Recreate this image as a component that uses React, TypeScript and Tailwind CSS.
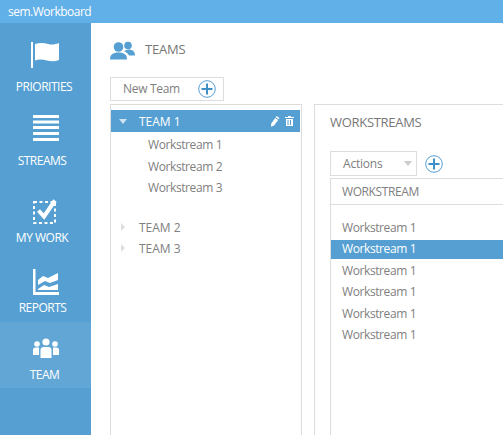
import { ReactNode } from "react";

function FlagIcon() {
  return (
    <svg width="30" height="26" viewBox="0 0 30 26" fill="white">
      <rect x="0" y="0" width="2" height="26" />
      <path d="M4 2c5-1.500 9-1 13 0s7 .5 11-1v17c-4 1.500-8 1.500-12 .5s-8-1.500-12 0z" />
    </svg>
  );
}

function StreamsIcon() {
  return (
    <svg width="26" height="26" viewBox="0 0 26 26" fill="white">
      <rect x="0" y="0" width="26" height="3" />
      <rect x="0" y="5.5" width="26" height="3" />
      <rect x="0" y="11" width="26" height="3" />
      <rect x="0" y="17" width="26" height="3" />
      <rect x="0" y="23" width="26" height="3" />
    </svg>
  );
}

function WorkIcon() {
  return (
    <svg width="26" height="27" viewBox="0 0 26 27" fill="none">
      <rect x="1" y="4" width="21" height="21" stroke="white" strokeWidth="2" strokeDasharray="3 2.5" />
      <path d="M5.5 12.5l5.5 6L22 2.5" stroke="white" strokeWidth="4" />
    </svg>
  );
}

function ReportsIcon() {
  return (
    <svg width="26" height="26" viewBox="0 0 26 26" fill="white">
      <path d="M0 0h2.5v23H26v3H0z" />
      <path d="M5 11l5-4 5 2 10-5v7l-8 3-5-2-7 4z" />
      <path d="M5 20l6-4 5 2 9-3v6H5z" />
    </svg>
  );
}

function TeamIcon() {
  return (
    <svg width="26" height="20" viewBox="0 0 26 20" fill="white">
      <circle cx="13" cy="4" r="3.6" />
      <path d="M7.5 20v-8c0-2 1.5-3 3-3h5c1.500 0 3 1 3 3v8z" />
      <circle cx="4" cy="6" r="2.8" />
      <path d="M0 17v-5c0-1.500 1-2.500 2.500-2.500h3.500L6 17z" />
      <circle cx="22" cy="6" r="2.800" />
      <path d="M26 17v-5c0-1.500-1-2.500-2.500-2.500H20v7.500z" />
    </svg>
  );
}

function PeopleIcon() {
  return (
    <svg width="25" height="19" viewBox="0 0 25 19" fill="#559fd2">
      <circle cx="8.500" cy="6" r="4.800" />
      <path d="M0 18.500c0-5 3-7 8.500-7s8.500 2 8.500 7z" />
      <circle cx="18" cy="4.500" r="3.800" />
      <path d="M14 10c1.500-1 3-1.500 4.500-1.500 4 0 6.500 2 6.500 6h-6c-1-2-3-3.500-5-4.500z" />
    </svg>
  );
}

function PlusCircle() {
  return (
    <svg width="18" height="18" viewBox="0 0 18 18" fill="none">
      <circle cx="9" cy="9" r="8.300" stroke="#559fd2" strokeWidth="1" />
      <path d="M9 3.500v11M3.500 9h11" stroke="#3f8fc8" strokeWidth="2" />
    </svg>
  );
}

function NavItem(props: { icon: ReactNode; label: string; className: string; labelClass?: string; active?: boolean }) {
  return (
    <div
      className={`flex flex-col items-center text-white text-[12px] leading-4 tracking-[-0.5px] ${props.active ? "bg-[#62a6d6]" : ""} ${props.className}`}
    >
      {props.icon}
      <span className={props.labelClass}>{props.label}</span>
    </div>
  );
}

export default function App() {
  const rows = [false, true, false, false, false, false];

  return (
    <div
      className="flex h-[435px] w-[503px] flex-col overflow-hidden bg-white text-[#808080]"
      style={{ fontFamily: '"Open Sans", sans-serif' }}
    >
      <div className="flex h-[23px] shrink-0 items-center bg-[#62b0e8] pl-[8px] text-[12px] tracking-[-0.5px] text-white">
        sem.Workboard
      </div>

      <div className="flex min-h-0 flex-1">
        <div className="flex w-[91px] shrink-0 flex-col bg-[#559fd2]">
          <NavItem className="h-[73px] pt-[19px] gap-[11px]" labelClass="pr-[3px]" icon={<FlagIcon />} label="PRIORITIES" />
          <NavItem className="h-[83px] pt-[19px] gap-[12px]" labelClass="pr-[7px]" icon={<StreamsIcon />} label="STREAMS" />
          <NavItem className="h-[83px] pt-[19px] gap-[5px]" labelClass="pr-[7px]" icon={<WorkIcon />} label="MY WORK" />
          <NavItem className="h-[60px] pt-[7px] gap-[5px]" labelClass="pr-[6px]" icon={<ReportsIcon />} label="REPORTS" />
          <NavItem className="h-[66px] pt-[16px] gap-[9px]" labelClass="pr-[2px]" icon={<TeamIcon />} label="TEAM" active />
        </div>

        <div className="flex min-w-0 flex-1 flex-col pl-[19px]">
          <div className="flex h-[54px] shrink-0 items-center gap-[10px] text-[13px] tracking-[-0.2px] text-[#777777]">
            <PeopleIcon />
            <span>TEAMS</span>
          </div>

          <div className="flex h-[24px] w-[114px] shrink-0 items-center justify-between border border-[#dddddd] pl-[12px] pr-[7px] text-[12px] tracking-[-0.3px]">
            <span>New Team</span>
            <PlusCircle />
          </div>

          <div className="mt-[3px] flex min-h-0 flex-1 gap-[12px]">
            <div className="h-[340px] w-[192px] shrink-0 border border-[#dddddd] pt-[5px]">
              <div className="flex h-[22px] w-[189px] items-center bg-[#559fd2] text-[12px] text-white">
                <span className="ml-[8px] h-0 w-0 border-x-[4px] border-t-[5px] border-x-transparent border-t-[#cfe3f1]" />
                <span className="ml-[12px] flex-1 pt-[1px]">TEAM 1</span>
                <svg width="10" height="11" viewBox="0 0 10 11" fill="white" className="mr-[5px]">
                  <path d="M6.500 0l3 2-.8 1.300-3-2zM5.200 2l3 2-4.200 5.500-3 1.200.2-3.200z" />
                </svg>
                <svg width="9" height="10" viewBox="0 0 9 10" fill="white" className="mr-[6px]">
                  <path d="M3 0h3v1h3v1H0V1h3zM1 3h7v7H1zM2.500 4v5h1V4zM5 4v5h1V4z" />
                </svg>
              </div>

              <div className="mt-[2px] flex flex-col pl-[37px] text-[12px] leading-[21.5px] tracking-[-0.4px]">
                <span>Workstream 1</span>
                <span>Workstream 2</span>
                <span>Workstream 3</span>
              </div>

              <div className="mt-[18px] flex flex-col text-[12px] leading-[21px]">
                {["TEAM 2", "TEAM 3"].map((team) => (
                  <div key={team} className="flex items-center">
                    <span className="ml-[10px] h-0 w-0 border-y-[4px] border-l-[4px] border-y-transparent border-l-[#dddddd]" />
                    <span className="ml-[14px]">{team}</span>
                  </div>
                ))}
              </div>
            </div>

            <div className="h-[340px] flex-1 border border-[#dddddd] border-r-0 pl-[15px]">
              <div className="flex h-[34px] items-center pt-[1px] text-[13px] tracking-[-0.3px] text-[#777777]">WORKSTREAMS</div>

              <div className="mt-[12px] flex items-center gap-[8px]">
                <div className="flex h-[25px] w-[87px] items-center justify-between border border-[#dddddd] pl-[12px] pr-[4px] text-[12px] tracking-[-0.2px]">
                  <span>Actions</span>
                  <span className="h-0 w-0 border-x-[4px] border-t-[5px] border-x-transparent border-t-[#cccccc]" />
                </div>
                <PlusCircle />
              </div>

              <div className="mt-[2px] h-[400px] border-l border-[#dddddd]">
                <div className="flex h-[27px] items-center border-y border-[#dddddd] pl-[11px] text-[12px] tracking-[-0.4px]">WORKSTREAM</div>
                <div className="flex flex-col gap-[2.6px] pt-[13px] text-[12px] tracking-[-0.4px]">
                  {rows.map((selected, i) => (
                    <div
                      key={i}
                      className={`flex h-[19px] items-center pl-[11px] ${selected ? "bg-[#559fd2] text-white" : ""}`}
                    >
                      Workstream 1
                    </div>
                  ))}
                </div>
              </div>
            </div>
          </div>
        </div>
      </div>
    </div>
  );
}
